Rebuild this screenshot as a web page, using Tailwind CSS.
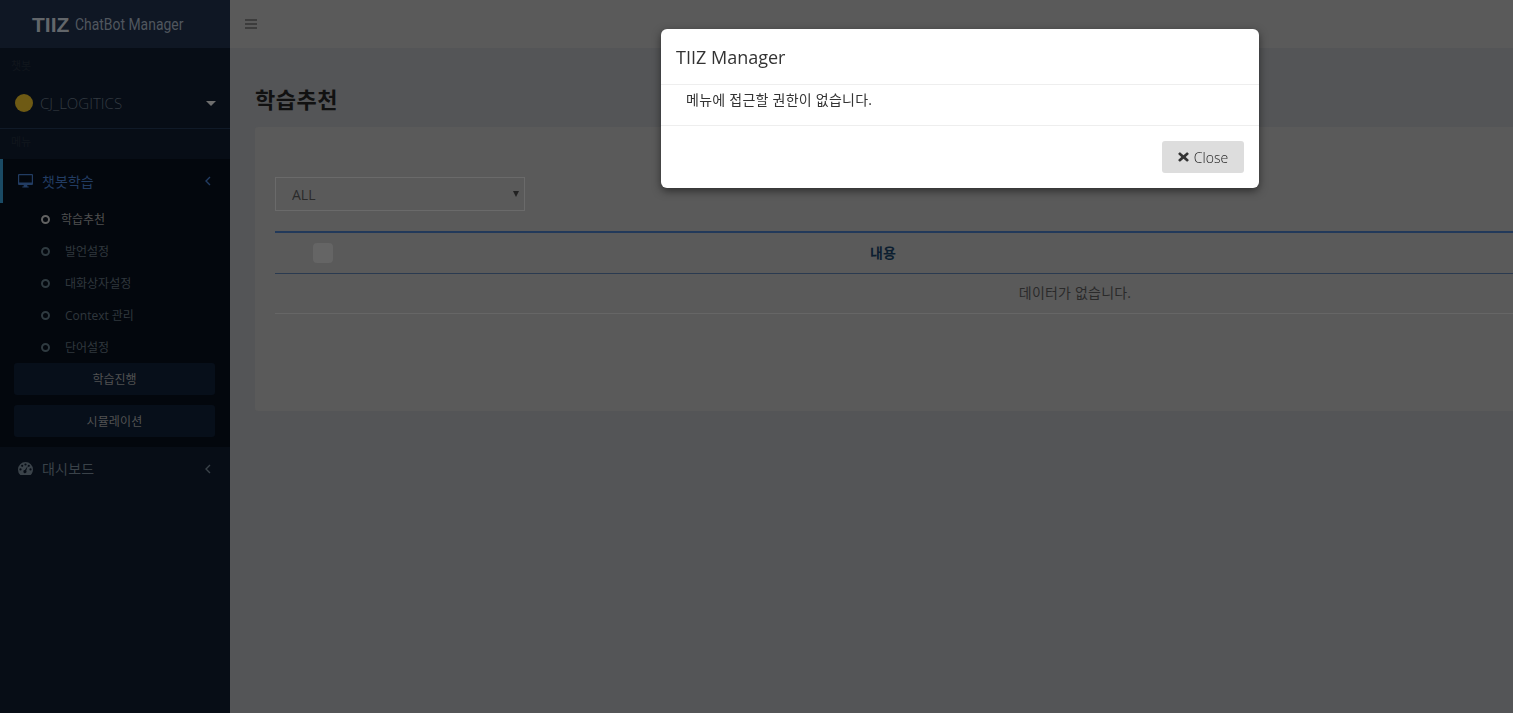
<!DOCTYPE html>
<html lang="ko">
<head>
    <meta charset="UTF-8">
    <title>TIIZ ChatBot Manager</title>
    <script src="https://cdn.jsdelivr.net/npm/@tailwindcss/browser@4"></script>
</head>
<body class="h-[713px] w-[1513px] overflow-hidden bg-[#545557] font-['Open_Sans','Noto_Sans_CJK_KR',sans-serif] text-[#111]">

    <div class="flex h-[713px]">
        <!-- sidebar -->
        <aside class="w-[230px] shrink-0 bg-[#070d16] text-[#343b42]">
            <div class="flex h-12 items-center gap-[6px] bg-[#0f1724] pl-[32px] pt-[1px]">
                <span class="text-[21px] font-bold text-[#62666a] font-['Liberation_Sans',sans-serif]">TIIZ</span>
                <span class="w-[109px] origin-left scale-x-[.87] whitespace-nowrap text-[16px] text-[#50565e] font-['Roboto',sans-serif]">ChatBot Manager</span>
            </div>
            <div class="h-8 pl-[11px] pt-[10px] text-[11px] leading-4 text-[#11161d]">챗봇</div>
            <div class="flex h-[49px] items-center border-b border-[#101a28] pb-[2px] pl-[15px] pr-[14px]">
                <span class="h-[18px] w-[18px] rounded-full bg-[#6e5a14]"></span>
                <span class="ml-[7px] flex-1 text-[15px] font-light">CJ_LOGITICS</span>
                <span class="h-0 w-0 border-x-[5px] border-t-[5px] border-x-transparent border-t-[#6e6e6e]"></span>
            </div>
            <div class="h-[30px] pl-[11px] pt-[5px] text-[11px] leading-4 text-[#11161d]">메뉴</div>

            <div class="h-[288px] bg-[#03070d]">
                <div class="flex h-11 items-center border-l-[3px] border-[#1a4a64] pl-[15px] pr-[19px] text-[#223c62]">
                    <svg class="h-[14px] w-[15px]" viewBox="0 0 15 14" fill="currentColor"><path fill-rule="evenodd" d="M1 0h13a1 1 0 0 1 1 1v9a1 1 0 0 1-1 1H9.200l.3 1.400h1.200V13.600H4.300V12.400h1.200L5.800 11H1a1 1 0 0 1-1-1V1a1 1 0 0 1 1-1zm.2 1.200v7.300h12.600V1.200z"/></svg>
                    <span class="ml-[9px] flex-1 text-[14px]">챗봇학습</span>
                    <svg class="h-[10px] w-[6px]" viewBox="0 0 6 10" fill="none" stroke="currentColor" stroke-width="1.4"><path d="M5 1 1 5l4 4"/></svg>
                </div>
                <ul class="text-[12px] text-[#30373d]">
                    <li class="flex h-8 items-center pl-[41px] text-[#505050]"><span class="h-[9px] w-[9px] rounded-full border-2 border-[#626262]"></span><span class="ml-[11px] pt-[2px]">학습추천</span></li>
                    <li class="flex h-8 items-center pl-[41px]"><span class="h-[9px] w-[9px] rounded-full border-2 border-[#2f3a40]"></span><span class="ml-[15px] pt-[2px]">발언설정</span></li>
                    <li class="flex h-8 items-center pl-[41px]"><span class="h-[9px] w-[9px] rounded-full border-2 border-[#2f3a40]"></span><span class="ml-[15px] pt-[2px]">대화상자설정</span></li>
                    <li class="flex h-8 items-center pl-[41px]"><span class="h-[9px] w-[9px] rounded-full border-2 border-[#2f3a40]"></span><span class="ml-[15px] pt-[2px]">Context 관리</span></li>
                    <li class="flex h-8 items-center pl-[41px]"><span class="h-[9px] w-[9px] rounded-full border-2 border-[#2f3a40]"></span><span class="ml-[15px] pt-[2px]">단어설정</span></li>
                </ul>
                <div class="flex flex-col gap-[10px] pl-[14px] pr-[15px]">
                    <button class="h-8 rounded-[3px] bg-[#070f1a] pt-[1px] text-[12px] text-[#525252]">학습진행</button>
                    <button class="h-8 rounded-[3px] bg-[#070f1a] pt-[1px] text-[12px] tracking-[0.2px] text-[#525252]">시뮬레이션</button>
                </div>
            </div>

            <div class="flex h-11 items-center pb-[1px] pl-[18px] pr-[19px] text-[#3a4249]">
                <svg class="h-[13px] w-[15px]" viewBox="0 0 15 13" fill="currentColor"><path fill-rule="evenodd" d="M7.500 0A7.500 7.500 0 0 1 15 7.500c0 2-.8 3.900-2.100 5.300-.2.1-.4.2-.6.2H2.700c-.2 0-.4-.1-.6-.2A7.600 7.600 0 0 1 0 7.500 7.500 7.500 0 0 1 7.500 0zM2.500 6.300a1.100 1.100 0 1 0 0 2.200 1.100 1.100 0 0 0 0-2.200zM4.200 2.700a1.100 1.100 0 1 0 0 2.200 1.100 1.100 0 0 0 0-2.200zM7.500 1.400a1.100 1.100 0 1 0 0 2.200 1.100 1.100 0 0 0 0-2.200zM10.800 2.700a1.100 1.100 0 1 0 0 2.200 1.100 1.100 0 0 0 0-2.200zM12.500 6.300a1.100 1.100 0 1 0 0 2.200 1.100 1.100 0 0 0 0-2.200zM9.700 3.900 6.900 8.100a1.500 1.500 0 1 0 1.300.7z"/></svg>
                <span class="ml-[9px] flex-1 text-[14px] tracking-[0.2px]">대시보드</span>
                <svg class="h-[10px] w-[6px]" viewBox="0 0 6 10" fill="none" stroke="currentColor" stroke-width="1.4"><path d="M5 1 1 5l4 4"/></svg>
            </div>
        </aside>

        <!-- main, dimmed behind the modal -->
        <main class="min-w-0 flex-1 overflow-hidden">
            <header class="flex h-12 items-center bg-[#5a5a5a] pl-[15px]">
                <svg class="h-[12px] w-[12px] text-[#3c3c3c]" viewBox="0 0 12 12" fill="currentColor"><path d="M0 1h12v2H0zM0 5h12v2H0zM0 9h12v2H0z"/></svg>
            </header>
            <section class="w-[1665px] px-[25px]">
                <h1 class="flex h-[79px] items-center pt-[23px] text-[22px] font-bold leading-none tracking-[0.5px]">학습추천</h1>
                <div class="h-[284px] rounded-[3px] bg-[#5a5a5a] px-5 pt-[50px]">
                    <div class="relative h-[34px] w-[250px]">
                        <select class="h-full w-full appearance-none border border-[#6a6a6a] bg-[#5a5a5a] pl-4 text-[14px] text-[#2a2a2a]"><option>ALL</option></select>
                        <span class="absolute right-[6px] top-[14px] h-0 w-0 border-x-[3.5px] border-t-[6px] border-x-transparent border-t-[#222]"></span>
                    </div>
                    <table class="mt-5 w-[1600px] border-t-2 border-[#22395a] text-[14px]">
                        <thead>
                            <tr class="h-[41px] border-b border-[#2a3a50]">
                                <th class="w-[76px]"><span class="ml-[38px] block h-5 w-5 rounded-[4px] bg-[#656565]"></span></th>
                                <th class="w-[1064px] text-center text-[14px] font-bold text-[#0c1e30]">내용</th>
                                <th></th>
                            </tr>
                        </thead>
                        <tbody>
                            <tr class="h-10 border-b border-[#666]">
                                <td colspan="3" class="pb-[2px] text-center text-[14px] tracking-[0.2px] text-[#2a2a2a]">데이터가 없습니다.</td>
                            </tr>
                        </tbody>
                    </table>
                </div>
            </section>
        </main>
    </div>

    <!-- modal -->
    <div class="fixed left-[661px] top-[29px] w-[598px] rounded-[6px] bg-white shadow-[0_3px_9px_rgba(0,0,0,0.5)]">
        <div class="flex h-[56px] items-center border-b border-[#eee] pl-[15px] pt-[2px] text-[18px] text-[#333]">TIIZ Manager</div>
        <div class="h-[41px] border-b border-[#eee] pl-[25px] pt-[5px] text-[14px] leading-5 tracking-[0.25px] text-[#333]">메뉴에 접근할 권한이 없습니다.</div>
        <div class="flex h-[62px] items-start justify-end pr-[15px] pt-[15px]">
            <button class="flex h-8 w-[82px] items-center justify-center gap-[5px] rounded-[3px] bg-[#ddd] text-[14px] font-light text-[#222]">
                <svg class="h-[10px] w-[11px]" viewBox="0 0 11 10" fill="#333"><path d="M2.300.4 5.500 3.200 8.700.4c.3-.2.600-.2.800 0l1.100 1.100c.2.200.2.500 0 .8L7.700 5l2.900 2.700c.2.300.2.600 0 .8L9.500 9.600c-.2.200-.5.200-.8 0L5.500 6.800 2.300 9.600c-.3.200-.6.200-.8 0L.4 8.500c-.2-.2-.2-.5 0-.8L3.300 5 .4 2.300c-.2-.3-.2-.6 0-.8L1.500.4c.2-.2.500-.2.800 0z"/></svg>
                Close
            </button>
        </div>
    </div>

</body>
</html>
